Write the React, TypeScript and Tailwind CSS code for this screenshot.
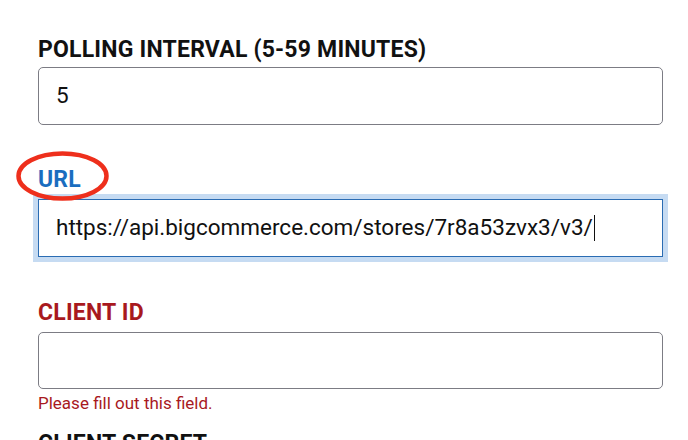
import React from "react";

const font = { fontFamily: "Roboto, 'Noto Sans', sans-serif" };

export default function App() {
  return (
    <div className="w-[688px] h-[440px] bg-white overflow-hidden relative" style={font}>
      <div className="pl-[38px] pt-[36px] w-[663px]">
        {/* Field 1 */}
        <div className="h-[28px] leading-[28px] text-[23px] font-bold text-[#111] tracking-[0.2px]">
          POLLING INTERVAL (5-59 MINUTES)
        </div>
        <div className="mt-[3px] h-[58px] rounded-[5px] border-[1.5px] border-[#7c7c84] flex items-center pl-[17px] text-[22.5px] text-[#111]">
          5
        </div>

        {/* Field 2 */}
        <div className="mt-[41px] h-[28px] leading-[28px] text-[23px] font-bold text-[#1a6dbf] tracking-[0.2px]">
          URL
        </div>
        <div className="mt-[5px] h-[58px] border-[1.5px] border-[#2a6cb3] outline-[5px] outline-solid outline-[#c6dbf2] flex items-center pl-[17px] text-[22.5px] text-[#111]">
          <span>https://api.bigcommerce.com/stores/7r8a53zvx3/v3/</span>
          <span className="inline-block w-[1.5px] h-[26px] bg-[#111] ml-[1px]" />
        </div>

        {/* Field 3 */}
        <div className="mt-[42px] h-[28px] leading-[28px] text-[23px] font-bold text-[#a8191e] tracking-[0.2px]">
          CLIENT ID
        </div>
        <div className="mt-[5px] h-[57px] rounded-[5px] border-[1.5px] border-[#7c7c84]" />
        <div className="mt-[4px] h-[20px] leading-[20px] text-[17px] text-[#a8191e]">
          Please fill out this field.
        </div>

        {/* Field 4 */}
        <div className="mt-[17px] h-[28px] leading-[28px] text-[23px] font-bold text-[#111] tracking-[0.2px]">
          CLIENT SECRET
        </div>
      </div>

      <svg className="absolute left-0 top-0 pointer-events-none" width="688" height="440">
        <ellipse cx="62.5" cy="176" rx="44" ry="22.5" fill="none" stroke="#ee2f1c" strokeWidth="4.5" />
      </svg>
    </div>
  );
}
